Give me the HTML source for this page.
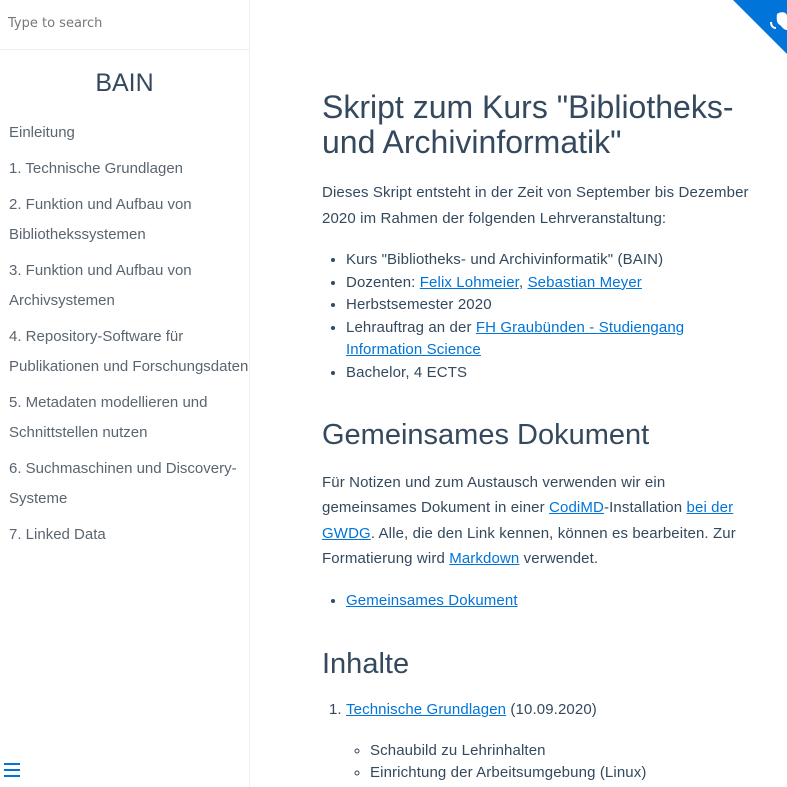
<!DOCTYPE html>
<html><head><meta charset="utf-8"><style>
*{box-sizing:border-box}
body{margin:0;width:787px;height:787px;overflow:hidden;font-family:"Liberation Sans",Arial,sans-serif;color:#34495e;background:#fff;position:relative}
.side{position:absolute;left:0;top:0;width:250px;height:787px;border-right:1px solid #eee;background:#fff}
.search{height:50px;border-bottom:1px solid #eee;padding:16px 8px;color:#777;font-family:"DejaVu Sans",sans-serif;font-size:13px}
.side h1{font-size:25px;text-align:center;margin:19px 0 0;color:#34495e;font-weight:normal}
.side ul{list-style:none;margin:20px 0 0;padding:0 0 0 9px}
.side li{font-size:15px;line-height:30px;color:#5a6570;margin-bottom:6px}
.menu{position:absolute;left:4px;top:763px;width:16px}
.menu i{display:block;height:2px;background:#0074d9;margin-bottom:4px}
.main{position:absolute;left:322px;top:0;width:435px;letter-spacing:0.12px}
h1.t{font-size:32px;font-weight:normal;line-height:35px;margin:90px 0 0;letter-spacing:0}
p{font-size:15px;line-height:25.5px;margin:20px 0 0}
h2{font-size:29px;font-weight:normal;margin:0;line-height:32px;letter-spacing:0}
ul.c,ol.c{font-size:15px;line-height:22.6px;margin:0;padding-left:24px}
a{color:#0074d9;text-decoration:underline}
</style></head><body>
<div class="side">
<div class="search">Type to search</div>
<h1>BAIN</h1>
<ul>
<li>Einleitung</li>
<li>1. Technische Grundlagen</li>
<li>2. Funktion und Aufbau von Bibliothekssystemen</li>
<li>3. Funktion und Aufbau von Archivsystemen</li>
<li>4. Repository-Software für Publikationen und Forschungsdaten</li>
<li>5. Metadaten modellieren und Schnittstellen nutzen</li>
<li>6. Suchmaschinen und Discovery-Systeme</li>
<li>7. Linked Data</li>
</ul>
<div class="menu"><i></i><i></i><i></i></div>
</div>
<svg style="position:absolute;left:733px;top:0" width="54" height="54"><polygon points="0,0 54,0 54,54" fill="#0074d9"/><path d="M44 14c4-3 10-2 10 2v14c-3 0-5-3-7-5-2-1-4-3-3-11z" fill="#fff"/><path d="M38 22c0 4 2 6 5 6" stroke="#fff" stroke-width="2" fill="none"/></svg>
<div class="main">
<h1 class="t">Skript zum Kurs "Bibliotheks- und Archivinformatik"</h1>
<p style="margin-top:20px">Dieses Skript entsteht in der Zeit von September bis Dezember 2020 im Rahmen der folgenden Lehrveranstaltung:</p>
<ul class="c" style="margin-top:18px">
<li>Kurs "Bibliotheks- und Archivinformatik" (BAIN)</li>
<li>Dozenten: <a>Felix Lohmeier</a>, <a>Sebastian Meyer</a></li>
<li>Herbstsemester 2020</li>
<li>Lehrauftrag an der <a>FH Graubünden - Studiengang Information Science</a></li>
<li>Bachelor, 4 ECTS</li>
</ul>
<h2 style="margin-top:34px">Gemeinsames Dokument</h2>
<p style="margin-top:19px">Für Notizen und zum Austausch verwenden wir ein gemeinsames Dokument in einer <a>CodiMD</a>-Installation <a>bei der GWDG</a>. Alle, die den Link kennen, können es bearbeiten. Zur Formatierung wird <a>Markdown</a> verwendet.</p>
<ul class="c" style="margin-top:18px"><li><a>Gemeinsames Dokument</a></li></ul>
<h2 style="margin-top:36px">Inhalte</h2>
<ol class="c" style="margin-top:19px"><li><a>Technische Grundlagen</a> (10.09.2020)
<ul style="list-style:circle;padding-left:24px;margin-top:18px"><li>Schaubild zu Lehrinhalten</li><li>Einrichtung der Arbeitsumgebung (Linux)</li></ul></li></ol>
</div>
</body></html>
